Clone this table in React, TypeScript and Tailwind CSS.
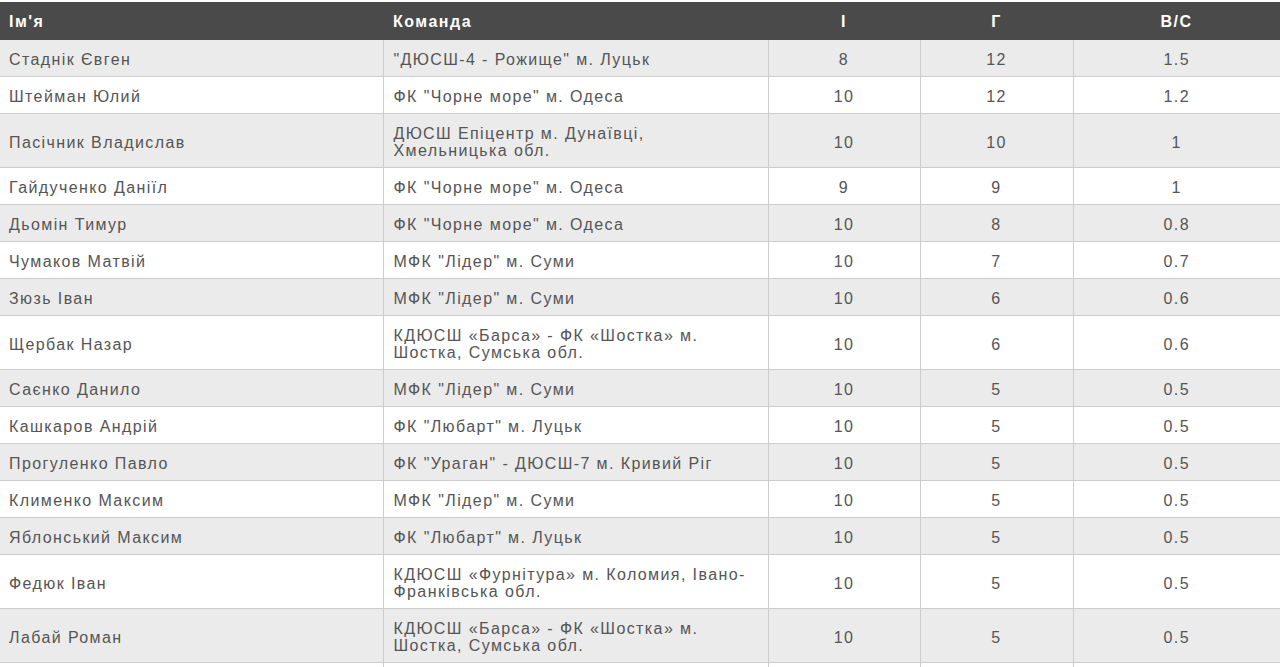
import React from "react";

type Row = { name: string; team: React.ReactNode; i: string; g: string; vs: string };

const rows: Row[] = [
  { name: "Стаднік Євген", team: '"ДЮСШ-4 - Рожище" м. Луцьк', i: "8", g: "12", vs: "1.5" },
  { name: "Штейман Юлий", team: 'ФК "Чорне море" м. Одеса', i: "10", g: "12", vs: "1.2" },
  { name: "Пасічник Владислав", team: <>ДЮСШ Епіцентр м. Дунаївці,<br />Хмельницька обл.</>, i: "10", g: "10", vs: "1" },
  { name: "Гайдученко Даніїл", team: 'ФК "Чорне море" м. Одеса', i: "9", g: "9", vs: "1" },
  { name: "Дьомін Тимур", team: 'ФК "Чорне море" м. Одеса', i: "10", g: "8", vs: "0.8" },
  { name: "Чумаков Матвій", team: 'МФК "Лідер" м. Суми', i: "10", g: "7", vs: "0.7" },
  { name: "Зюзь Іван", team: 'МФК "Лідер" м. Суми', i: "10", g: "6", vs: "0.6" },
  { name: "Щербак Назар", team: <>КДЮСШ «Барса» - ФК «Шостка» м.<br />Шостка, Сумська обл.</>, i: "10", g: "6", vs: "0.6" },
  { name: "Саєнко Данило", team: 'МФК "Лідер" м. Суми', i: "10", g: "5", vs: "0.5" },
  { name: "Кашкаров Андрій", team: 'ФК "Любарт" м. Луцьк', i: "10", g: "5", vs: "0.5" },
  { name: "Прогуленко Павло", team: 'ФК "Ураган" - ДЮСШ-7 м. Кривий Ріг', i: "10", g: "5", vs: "0.5" },
  { name: "Клименко Максим", team: 'МФК "Лідер" м. Суми', i: "10", g: "5", vs: "0.5" },
  { name: "Яблонський Максим", team: 'ФК "Любарт" м. Луцьк', i: "10", g: "5", vs: "0.5" },
  { name: "Федюк Іван", team: <>КДЮСШ «Фурнітура» м. Коломия, Івано-<br />Франківська обл.</>, i: "10", g: "5", vs: "0.5" },
  { name: "Лабай Роман", team: <>КДЮСШ «Барса» - ФК «Шостка» м.<br />Шостка, Сумська обл.</>, i: "10", g: "5", vs: "0.5" },
  { name: "Шевчук Олег", team: 'ФК "Любарт" м. Луцьк', i: "10", g: "5", vs: "0.5" },
];

export default function App() {
  return (
    <div className="bg-white pt-[2px]" style={{ fontFamily: '"Liberation Sans", Arial, sans-serif' }}>
      <table className="w-[1280px] table-fixed border-collapse text-[16px] leading-[17px] tracking-[1.4px]">
        <colgroup>
          <col className="w-[383px]" />
          <col className="w-[385px]" />
          <col className="w-[152px]" />
          <col className="w-[153px]" />
          <col />
        </colgroup>
        <thead>
          <tr className="bg-[#4a4a4a] text-white">
            <th className="h-[38px] px-[9px] pt-[1px] text-left font-bold tracking-[1.5px]">Ім'я</th>
            <th className="px-[10px] pt-[1px] text-left font-bold tracking-[1.5px]">Команда</th>
            <th className="px-[9px] pt-[1px] text-center font-bold tracking-[1.5px]">І</th>
            <th className="px-[9px] pt-[1px] text-center font-bold tracking-[1.5px]">Г</th>
            <th className="px-[9px] pt-[1px] text-center font-bold tracking-[1.5px]">В/С</th>
          </tr>
        </thead>
        <tbody className="text-[#555]">
          {rows.map((r, idx) => (
            <tr key={idx} className={idx % 2 === 0 ? "bg-[#ebebeb]" : "bg-white"}>
              <td className="border-b border-[#cccccc] px-[9px] pt-[11px] pb-[8px] align-middle">{r.name}</td>
              <td className="border-b border-l border-[#cccccc] px-[10px] pt-[11px] pb-[8px] align-middle">{r.team}</td>
              <td className="border-b border-l border-[#cccccc] px-[9px] pt-[11px] pb-[8px] text-center align-middle">{r.i}</td>
              <td className="border-b border-l border-[#cccccc] px-[9px] pt-[11px] pb-[8px] text-center align-middle">{r.g}</td>
              <td className="border-b border-l border-[#cccccc] px-[9px] pt-[11px] pb-[8px] text-center align-middle">{r.vs}</td>
            </tr>
          ))}
        </tbody>
      </table>
    </div>
  );
}
